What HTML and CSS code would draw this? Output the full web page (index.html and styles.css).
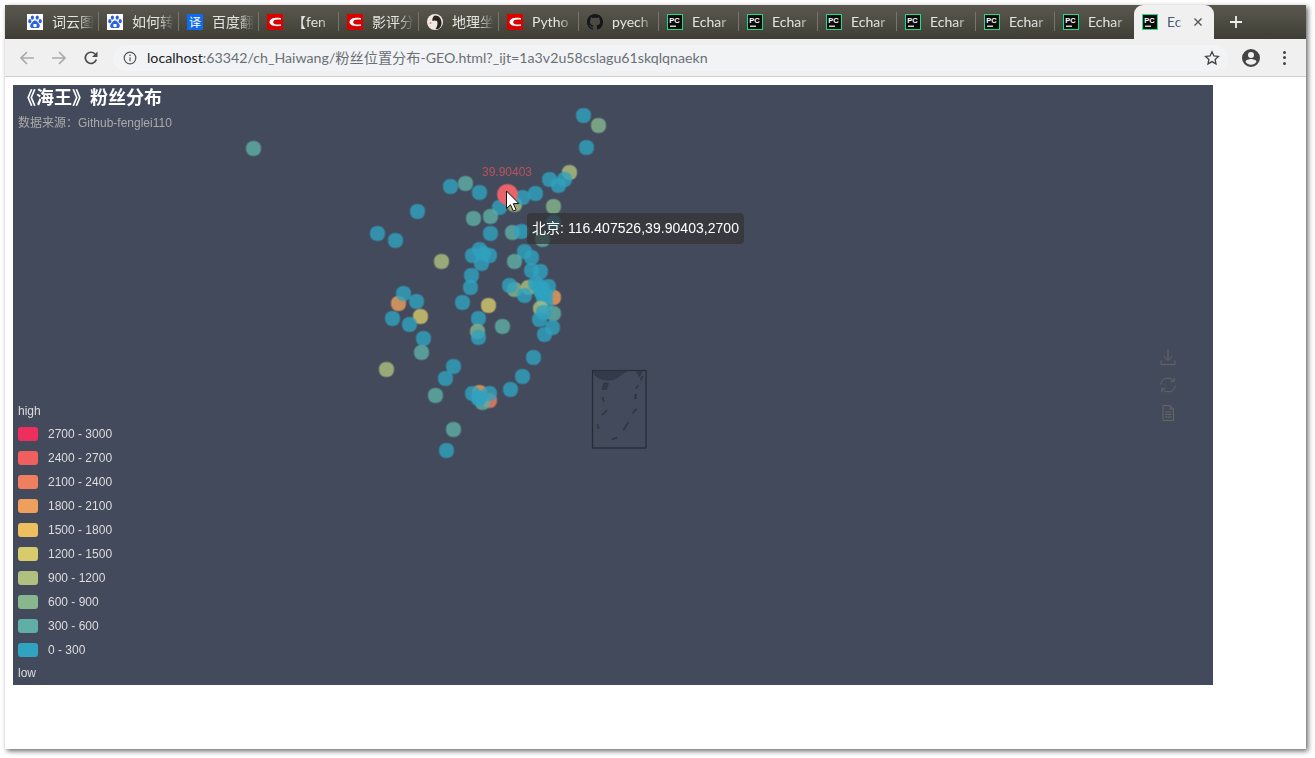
FILE: index.html
```html
<!DOCTYPE html>
<html lang="zh">
<head>
<meta charset="utf-8">
<title>粉丝位置分布</title>
<link rel="stylesheet" href="styles.css">
</head>
<body>
<svg class="defs" width="0" height="0" aria-hidden="true">
  <defs>
    <symbol id="baidu" viewBox="0 0 16 16">
      <rect width="16" height="16" fill="#fff"/>
      <g fill="#2f5fe0">
        <ellipse cx="5.4" cy="3.6" rx="1.6" ry="2.2"/>
        <ellipse cx="10.2" cy="3.6" rx="1.6" ry="2.2"/>
        <ellipse cx="2.8" cy="7.2" rx="1.6" ry="2.1"/>
        <ellipse cx="13.2" cy="7.2" rx="1.6" ry="2.1"/>
        <path d="M8 6.6c2 0 2.4 1.8 3.8 2.9 1.5 1.2 1.5 4.6-1.4 4.6-1 0-1.600-.4-2.400-.4s-1.400.4-2.400.4c-2.900 0-2.900-3.400-1.400-4.600C5.600 8.400 6 6.600 8 6.600z"/>
      </g>
      <rect x="6.300" y="10" width="3.400" height="3" rx=".8" fill="#fff"/>
    </symbol>
    <symbol id="csdn" viewBox="0 0 16 16">
      <rect width="16" height="16" fill="#d90000"/>
      <path fill="#fff" d="M14 4.300C9 3 2.500 4.300 2.500 8c0 3.700 6.500 5 11.500 3.700v-1.500C10 11 6.200 10.500 6.200 8c0-2.500 3.800-3 7.800-2.200z"/>
    </symbol>
    <symbol id="pc" viewBox="0 0 16 16">
      <rect width="16" height="16" fill="#17e08e"/>
      <rect x="1" y="1" width="14" height="14" fill="#0b0b0b"/>
      <text x="2.200" y="8.500" class="pc-text">PC</text>
      <rect x="3" y="11.600" width="6" height="1.200" fill="#fff"/>
    </symbol>
    <symbol id="github" viewBox="0 0 16 16">
      <path fill="#15161a" d="M8 0C3.580 0 0 3.580 0 8c0 3.540 2.290 6.530 5.470 7.590.4.070.55-.17.55-.38 0-.19-.01-.82-.01-1.490-2.010.37-2.530-.49-2.690-.94-.09-.23-.48-.94-.82-1.130-.28-.15-.68-.52-.01-.53.63-.01 1.080.58 1.230.82.720 1.210 1.870.87 2.330.66.070-.52.280-.87.510-1.070-1.780-.2-3.640-.89-3.640-3.950 0-.87.310-1.590.820-2.150-.08-.2-.36-1.020.08-2.120 0 0 .670-.21 2.200.82.640-.18 1.320-.27 2-.27s1.360.09 2 .27c1.530-1.040 2.200-.82 2.200-.82.440 1.100.160 1.920.080 2.120.51.560.820 1.270.820 2.150 0 3.070-1.870 3.750-3.650 3.950.29.250.54.730.54 1.480 0 1.070-.01 1.930-.01 2.200 0 .21.150.46.550.38A8.010 8.010 0 0 0 16 8c0-4.420-3.580-8-8-8z"/>
    </symbol>
    <rect id="d" x="-7.500" y="-7.500" width="15" height="15" rx="6.500"/>
  </defs>
</svg>

<div class="window">
  <nav class="tabstrip">
    <div class="tab"><svg class="fav"><use href="#baidu"/></svg><span class="tab-title">词云图</span></div>
    <div class="tab"><svg class="fav"><use href="#baidu"/></svg><span class="tab-title">如何转</span></div>
    <div class="tab"><span class="fav fav-fanyi">译</span><span class="tab-title">百度翻</span></div>
    <div class="tab"><svg class="fav"><use href="#csdn"/></svg><span class="tab-title">【fen</span></div>
    <div class="tab"><svg class="fav"><use href="#csdn"/></svg><span class="tab-title">影评分</span></div>
    <div class="tab"><svg class="fav" viewBox="0 0 16 16"><circle cx="8" cy="8" r="8" fill="#efe9e2"/><path d="M8 1.500c4.500 0 6.500 3.500 6.500 7.500 0 3-1.500 5-3.500 6H8.500c2-2.500 2.500-6 1.500-8-1.500-.5-3-1-4.500 0C5 5 6 2 8 1.500z" fill="#2b2320"/><circle cx="3.500" cy="9" r=".9" fill="#d88a9a"/></svg><span class="tab-title">地理坐</span></div>
    <div class="tab"><svg class="fav"><use href="#csdn"/></svg><span class="tab-title">Pytho</span></div>
    <div class="tab"><svg class="fav"><use href="#github"/></svg><span class="tab-title">pyech</span></div>
    <div class="tab"><svg class="fav"><use href="#pc"/></svg><span class="tab-title">Echar</span></div>
    <div class="tab"><svg class="fav"><use href="#pc"/></svg><span class="tab-title">Echar</span></div>
    <div class="tab"><svg class="fav"><use href="#pc"/></svg><span class="tab-title">Echar</span></div>
    <div class="tab"><svg class="fav"><use href="#pc"/></svg><span class="tab-title">Echar</span></div>
    <div class="tab"><svg class="fav"><use href="#pc"/></svg><span class="tab-title">Echar</span></div>
    <div class="tab"><svg class="fav"><use href="#pc"/></svg><span class="tab-title">Echar</span></div>
    <div class="tab tab-active">
      <svg class="fav"><use href="#pc"/></svg><span class="tab-title">Ec</span>
      <svg class="close" viewBox="0 0 10 10"><path d="M1.500 1.500l7 7m0-7l-7 7"/></svg>
    </div>
    <svg class="plus" viewBox="0 0 12 12"><path d="M6 0v12M0 6h12"/></svg>
  </nav>

  <header class="toolbar">
    <svg class="tool tool-off" viewBox="0 0 16 16"><path d="M15 8H2M8 2L2 8l6 6"/></svg>
    <svg class="tool tool-off" viewBox="0 0 16 16"><path d="M1 8h13M8 2l6 6-6 6"/></svg>
    <svg class="tool tool-reload" viewBox="0 0 16 16"><path d="M13.300 9.500A5.600 5.600 0 1 1 12 4"/><path class="solid" d="M14.500 1.500v5.500H9z"/></svg>
    <div class="omnibox">
      <svg class="info" viewBox="0 0 14 14"><circle cx="7" cy="7" r="5.800"/><path d="M7 6.200v4M7 3.600v1.500"/></svg>
      <span class="url"><span class="host">localhost</span>:63342/ch_Haiwang/粉丝位置分布-GEO.html?_ijt=1a3v2u58cslagu61skqlqnaekn</span>
      <svg class="star" viewBox="0 0 16 16"><path d="M8 1.800l1.900 4.100 4.500.5-3.300 3 .9 4.500L8 11.600l-4 2.300.9-4.500-3.300-3 4.500-.5z"/></svg>
    </div>
    <svg class="avatar" viewBox="0 0 18 18"><path fill-rule="evenodd" d="M9 0a9 9 0 1 0 0 18A9 9 0 0 0 9 0zm0 3a3 3 0 1 1 0 6 3 3 0 0 1 0-6zm0 12.700c-2.300 0-4.300-1.100-5.500-2.900C3.600 11 7.200 10 9 10s5.400 1 5.500 2.800c-1.200 1.800-3.200 2.900-5.500 2.900z"/></svg>
    <div class="menu"><i></i><i></i><i></i></div>
  </header>

  <main class="content">
    <section class="chart">
      <svg class="plot" viewBox="13 85 1200 600" width="1200" height="600">
        <g class="map">
          <rect x="592.500" y="370.500" width="53.500" height="77.500"/>
          <path class="land" d="M593 372.500c3 5.500 10 7.500 17 7.500s12-7 18-9.500h-34z"/>
          <path class="land" d="M636 370.500l3.500 6 3-6z"/>
          <path class="land" d="M602 389.500l2-6.500h4.500l-2 6.500z"/>
          <path class="isle" d="M602.500 397l1.500 5M602 415l5-5M597.500 424l1.200 5M612 439.500l5-2M623.500 430l5-8M632.500 413.500l4-5"/>
          <path class="isle isle-thick" d="M635.500 394v5"/>
          <path class="isle" d="M636 388.500l2.500-3.500M640.500 380l2.500-4"/>
        </g>
        <g class="dots">
          <use href="#d" x="253" y="148" class="v1"/>
          <use href="#d" x="583" y="115" class="v0"/>
          <use href="#d" x="598" y="125" class="v2"/>
          <use href="#d" x="586" y="147" class="v0"/>
          <use href="#d" x="569" y="172" class="v3"/>
          <use href="#d" x="549" y="179" class="v0"/>
          <use href="#d" x="564" y="179" class="v0"/>
          <use href="#d" x="558" y="185" class="v0"/>
          <use href="#d" x="535" y="193" class="v0"/>
          <use href="#d" x="514" y="204" class="v3"/>
          <use href="#d" x="522" y="197" class="v0"/>
          <use href="#d" x="499" y="207" class="v0"/>
          <use href="#d" x="479" y="192" class="v0"/>
          <use href="#d" x="465" y="183" class="v1"/>
          <use href="#d" x="450" y="186" class="v0"/>
          <use href="#d" x="417" y="211" class="v0"/>
          <use href="#d" x="377" y="233" class="v0"/>
          <use href="#d" x="395" y="240" class="v0"/>
          <use href="#d" x="473" y="218" class="v1"/>
          <use href="#d" x="490" y="216" class="v1"/>
          <use href="#d" x="490" y="233" class="v0"/>
          <use href="#d" x="553" y="206" class="v2"/>
          <use href="#d" x="553" y="222" class="v0"/>
          <use href="#d" x="512" y="232" class="v1"/>
          <use href="#d" x="521" y="231" class="v0"/>
          <use href="#d" x="542" y="239" class="v1"/>
          <use href="#d" x="441" y="261" class="v3"/>
          <use href="#d" x="472" y="255" class="v0"/>
          <use href="#d" x="479" y="249" class="v0"/>
          <use href="#d" x="483" y="253" class="v0"/>
          <use href="#d" x="489" y="255" class="v0"/>
          <use href="#d" x="481" y="263" class="v0"/>
          <use href="#d" x="524" y="251" class="v0"/>
          <use href="#d" x="531" y="257" class="v0"/>
          <use href="#d" x="514" y="261" class="v1"/>
          <use href="#d" x="471" y="275" class="v0"/>
          <use href="#d" x="470" y="287" class="v0"/>
          <use href="#d" x="531" y="270" class="v0"/>
          <use href="#d" x="540" y="271" class="v0"/>
          <use href="#d" x="462" y="302" class="v0"/>
          <use href="#d" x="488" y="305" class="v4"/>
          <use href="#d" x="398" y="303" class="v6"/>
          <use href="#d" x="403" y="293" class="v0"/>
          <use href="#d" x="416" y="301" class="v0"/>
          <use href="#d" x="420" y="316" class="v4"/>
          <use href="#d" x="392" y="318" class="v0"/>
          <use href="#d" x="409" y="324" class="v0"/>
          <use href="#d" x="423" y="338" class="v0"/>
          <use href="#d" x="421" y="352" class="v1"/>
          <use href="#d" x="386" y="369" class="v3"/>
          <use href="#d" x="453" y="366" class="v0"/>
          <use href="#d" x="445" y="378" class="v0"/>
          <use href="#d" x="435" y="395" class="v1"/>
          <use href="#d" x="478" y="318" class="v0"/>
          <use href="#d" x="477" y="331" class="v2"/>
          <use href="#d" x="478" y="337" class="v0"/>
          <use href="#d" x="502" y="326" class="v1"/>
          <use href="#d" x="514" y="289" class="v2"/>
          <use href="#d" x="528" y="287" class="v3"/>
          <use href="#d" x="553" y="297" class="v6"/>
          <use href="#d" x="524" y="295" class="v0"/>
          <use href="#d" x="535" y="283" class="v0"/>
          <use href="#d" x="542" y="288" class="v0"/>
          <use href="#d" x="548" y="286" class="v0"/>
          <use href="#d" x="509" y="285" class="v0"/>
          <use href="#d" x="545" y="295" class="v0"/>
          <use href="#d" x="540" y="290" class="v0"/>
          <use href="#d" x="538" y="285" class="v0"/>
          <use href="#d" x="541" y="292" class="v0"/>
          <use href="#d" x="543" y="298" class="v0"/>
          <use href="#d" x="545" y="303" class="v0"/>
          <use href="#d" x="540" y="308" class="v3"/>
          <use href="#d" x="553" y="313" class="v1"/>
          <use href="#d" x="543" y="312" class="v0"/>
          <use href="#d" x="539" y="319" class="v0"/>
          <use href="#d" x="552" y="327" class="v0"/>
          <use href="#d" x="544" y="334" class="v0"/>
          <use href="#d" x="533" y="357" class="v0"/>
          <use href="#d" x="522" y="376" class="v0"/>
          <use href="#d" x="510" y="389" class="v0"/>
          <use href="#d" x="479" y="392" class="v6"/>
          <use href="#d" x="489" y="400" class="v7"/>
          <use href="#d" x="482" y="402" class="v1"/>
          <use href="#d" x="472" y="393" class="v0"/>
          <use href="#d" x="489" y="393" class="v0"/>
          <use href="#d" x="478" y="398" class="v0"/>
          <use href="#d" x="479" y="397" class="v0"/>
          <use href="#d" x="453" y="429" class="v1"/>
          <use href="#d" x="446" y="450" class="v0"/>
          <circle cx="507" cy="194" r="10.500" class="hot"/>
        </g>
        <text x="507" y="176" class="hot-label">39.90403</text>
        <path class="cursor" d="M506.500 191v17.500l4-3.800 2.800 6.300 2.800-1.200-2.800-6.100 5.500-.3z"/>
      </svg>

      <div class="heading">
        <h1 class="title">《海王》粉丝分布</h1>
        <p class="subtitle">数据来源：Github-fenglei110</p>
      </div>

      <div class="legend">
        <div class="legend-end">high</div>
        <div class="legend-row"><i class="swatch s9"></i>2700 - 3000</div>
        <div class="legend-row"><i class="swatch s8"></i>2400 - 2700</div>
        <div class="legend-row"><i class="swatch s7"></i>2100 - 2400</div>
        <div class="legend-row"><i class="swatch s6"></i>1800 - 2100</div>
        <div class="legend-row"><i class="swatch s5"></i>1500 - 1800</div>
        <div class="legend-row"><i class="swatch s4"></i>1200 - 1500</div>
        <div class="legend-row"><i class="swatch s3"></i>900 - 1200</div>
        <div class="legend-row"><i class="swatch s2"></i>600 - 900</div>
        <div class="legend-row"><i class="swatch s1"></i>300 - 600</div>
        <div class="legend-row"><i class="swatch s0"></i>0 - 300</div>
        <div class="legend-end">low</div>
      </div>

      <div class="tools">
        <svg viewBox="0 0 16 16"><path d="M8 0.500v11M3.500 7L8 11.500 12.500 7M1 11.500v4h14v-4"/></svg>
        <svg viewBox="0 0 16 16"><path d="M.8 7.500A7.200 7.200 0 0 1 13.800 4M15.200 8.500A7.200 7.200 0 0 1 2.200 12M14.200 .8v3.500h-3.500M1.800 15.200v-3.500h3.500"/></svg>
        <svg viewBox="0 0 16 16"><path d="M3 .500h7l3.500 3.500v11.500H3zM10 .500V4h3.500M5 7h6.500M5 9.500h6.500M5 12h6.500"/></svg>
      </div>

      <div class="tooltip">北京: 116.407526,39.90403,2700</div>
    </section>
  </main>
</div>
</body>
</html>
```

FILE: styles.css
```css
* { box-sizing: border-box; }

html, body { margin: 0; height: 100%; }

body {
  background: #fff;
  padding: 5px 9px 9px 5px;
  font-family: "Liberation Sans", "Noto Sans CJK SC", sans-serif;
  overflow: hidden;
}

.defs { position: absolute; }

.window {
  width: 1301px;
  height: 744px;
  display: flex;
  flex-direction: column;
  background: #fff;
  box-shadow: 2px 2px 5px rgba(0, 0, 0, .6);
}

/* tab strip */
.tabstrip {
  flex: 0 0 34px;
  display: flex;
  padding-left: 14px;
  background: linear-gradient(#5a584e, #3f3e36);
}

.tab {
  flex: 0 0 79px;
  display: flex;
  align-items: center;
  padding-left: 8px;
  position: relative;
  height: 34px;
}

.tab:nth-child(-n+9) { flex-basis: 80px; }

.tab::after {
  content: "";
  position: absolute;
  right: 0;
  top: 7px;
  height: 19px;
  width: 1px;
  background: #77756c;
}

.tab:nth-last-child(3)::after { display: none; }

.fav {
  flex: 0 0 16px;
  width: 16px;
  height: 16px;
  display: block;
}

.fav-fanyi {
  background: #0f6cf0;
  color: #fff;
  font: 12px/16px "Noto Sans CJK SC", sans-serif;
  text-align: center;
  border-radius: 1px;
}

.pc-text {
  fill: #fff;
  font: bold 7.500px "Liberation Sans", sans-serif;
}

.tab-title {
  margin-left: 9px;
  width: 44px;
  white-space: nowrap;
  color: #e4e4e0;
  font: 14px/20px "Lato", "Noto Sans CJK SC", sans-serif;
  -webkit-mask-image: linear-gradient(90deg, #000 60%, transparent 96%);
  mask-image: linear-gradient(90deg, #000 60%, transparent 96%);
}

.tab-active {
  flex-basis: 80px;
  background: #f0f0f0;
  border-radius: 9px 9px 0 0;
}

.tab-active::after { display: none; }

.tab-active .tab-title {
  width: 18px;
  color: #4a5a78;
}

.close {
  width: 10px;
  height: 10px;
  margin-left: 8px;
  fill: none;
  stroke: #555;
  stroke-width: 1.400;
}

.plus {
  width: 12px;
  height: 12px;
  margin: 11px 0 0 16px;
  fill: none;
  stroke: #f0f0ea;
  stroke-width: 1.800;
}

/* toolbar */
.toolbar {
  flex: 0 0 38px;
  display: flex;
  align-items: center;
  padding: 0 20px 0 14px;
  background: #f0f0f0;
  border-bottom: 1px solid #cfcfcf;
}

.tool {
  width: 16px;
  height: 16px;
  margin-right: 16px;
  fill: none;
  stroke-width: 1.700;
}

.tool-off { stroke: #aaa; }

.tool-reload {
  stroke: #4a4a4a;
  margin-right: 14px;
}

.tool-reload .solid {
  fill: #4a4a4a;
  stroke: none;
}

.omnibox {
  flex: 1;
  height: 26px;
  display: flex;
  align-items: center;
  padding: 0 8px 0 10px;
  border-radius: 13px;
  background: #f1f3f4;
}

.info {
  width: 14px;
  height: 14px;
  fill: none;
  stroke: #555;
  stroke-width: 1.200;
}

.url {
  flex: 1;
  margin-left: 10px;
  color: #6a7076;
  font: 14.200px/20px "Lato", "Noto Sans CJK SC", sans-serif;
  white-space: nowrap;
}

.host { color: #202124; }

.star {
  width: 16px;
  height: 16px;
  fill: none;
  stroke: #444;
  stroke-width: 1.300;
}

.avatar {
  width: 18px;
  height: 18px;
  margin-left: 14px;
  fill: #444;
}

.menu {
  display: flex;
  flex-direction: column;
  gap: 2.500px;
  margin-left: 23px;
}

.menu i {
  width: 3px;
  height: 3px;
  border-radius: 50%;
  background: #444;
}

/* chart */
.content {
  flex: 1;
  padding: 8px;
}

.chart {
  position: relative;
  width: 1200px;
  height: 600px;
  background: #434a5c;
  display: flex;
  flex-direction: column;
  justify-content: space-between;
  padding: 0 5px;
  color: #ddd;
}

.plot {
  position: absolute;
  left: 0;
  top: 0;
  display: block;
}

.map rect {
  fill: none;
  stroke: #262b35;
  stroke-width: 1.200;
}

.land { fill: #333a48; stroke: #2c323e; stroke-width: .6; }

.isle { fill: none; stroke: #2f3542; stroke-width: 1.500; }

.isle-thick { stroke-width: 2.400; }

.dots {
  transform: translate(.5px, .5px);
  filter: blur(.35px);
}

.dots use { opacity: .8; }

.v0 { fill: #2fa3c0; }
.v1 { fill: #5fafa6; }
.v2 { fill: #87b68f; }
.v3 { fill: #b0c17f; }
.v4 { fill: #d8cb6c; }
.v6 { fill: #ee9f5e; }
.v7 { fill: #f07f5f; }

.hot { fill: #e8646a; }

.hot-label {
  fill: #b9545a;
  font: 12px "Liberation Sans", sans-serif;
  text-anchor: middle;
}

.cursor {
  fill: #fff;
  stroke: #111;
  stroke-width: 1;
}

.heading { position: relative; }

.title {
  margin: 0;
  padding-top: 2px;
  color: #fff;
  font: bold 18px/22px "Liberation Sans", "Noto Sans CJK SC", sans-serif;
}

.subtitle {
  margin: 7px 0 0;
  color: #aaa;
  font-size: 12px;
  line-height: 14px;
}

.legend {
  position: relative;
  font-size: 12px;
  line-height: 14px;
  padding-bottom: 5px;
}

.legend-end { height: 14px; }

.legend-row {
  display: flex;
  align-items: center;
  height: 14px;
  margin-top: 10px;
}

.legend-end + .legend-row { margin-top: 9px; }

.legend-row + .legend-end { margin-top: 9px; }

.swatch {
  width: 20px;
  height: 14px;
  margin-right: 10px;
  border-radius: 3px;
}

.s0 { background: #2fa3c0; }
.s1 { background: #5fafa6; }
.s2 { background: #87b68f; }
.s3 { background: #b0c17f; }
.s4 { background: #d8cb6c; }
.s5 { background: #eebf5f; }
.s6 { background: #ee9f5e; }
.s7 { background: #f07f5f; }
.s8 { background: #ee5f5e; }
.s9 { background: #ee2f5e; }

.tools {
  position: absolute;
  left: 1147px;
  top: 264px;
  display: flex;
  flex-direction: column;
  gap: 12px;
}

.tools svg {
  display: block;
  width: 16px;
  height: 16px;
  fill: none;
  stroke: #666;
  stroke-width: 1;
}

.tooltip {
  position: absolute;
  left: 514px;
  top: 128px;
  height: 31px;
  padding: 0 5px;
  border-radius: 4px;
  background: rgba(50, 50, 50, .7);
  color: #fff;
  font-size: 14px;
  letter-spacing: .035px;
  line-height: 31px;
  white-space: nowrap;
}
```
